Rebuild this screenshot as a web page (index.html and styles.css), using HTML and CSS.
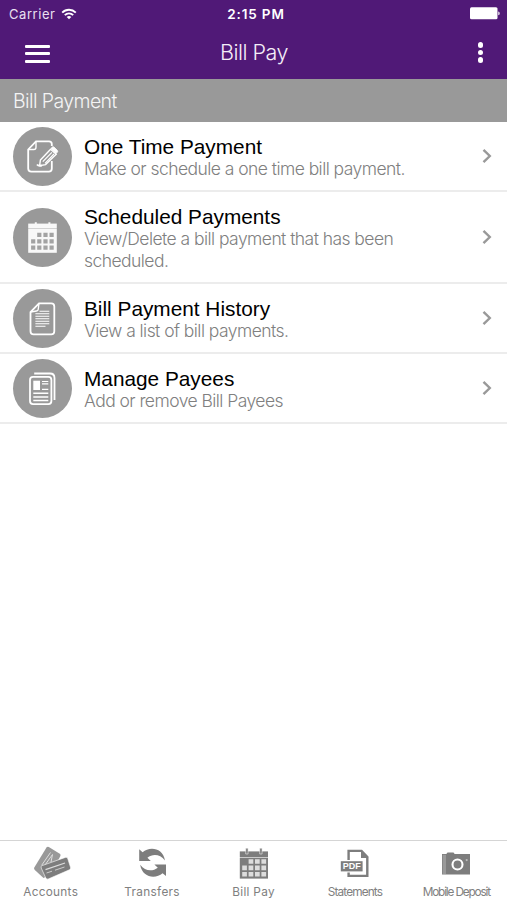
FILE: index.html
```html
<!DOCTYPE html>
<html lang="en">
<head>
    <meta charset="UTF-8">
    <meta name="viewport" content="width=device-width, initial-scale=1.0">
    <title>Bill Pay</title>
    <link rel="stylesheet" href="styles.css">
</head>
<body>
    <div class="status-bar">
        <div class="carrier">
            <span>Carrier</span>
            <svg width="16" height="12" viewBox="0 0 16 12" fill="none" stroke="#fff" stroke-width="1.9">
                <path d="M1.2 4.6C5 .8 11 .8 14.8 4.6M3.8 7.2C6.2 4.8 9.8 4.8 12.2 7.2"/>
                <path d="M5.7 8.9C7 7.7 9 7.7 10.3 8.9L8 11.3Z" fill="#fff" stroke="none"/>
            </svg>
        </div>
        <div class="clock">2:15 PM</div>
        <div class="battery">
            <svg width="30" height="13" viewBox="0 0 30 13" fill="#fff">
                <rect x="0" y="0.3" width="27.5" height="12" rx="1.5"/>
                <path d="M28.3 4.5C30.1 5 30.1 7.8 28.3 8.3Z"/>
            </svg>
        </div>
    </div>

    <div class="nav-bar">
        <div class="menu-button">
            <span></span>
            <span></span>
            <span></span>
        </div>
        <div class="nav-title">Bill Pay</div>
        <div class="more-button">
            <span></span>
            <span></span>
            <span></span>
        </div>
    </div>

    <div class="section-header"><span>Bill Payment</span></div>

    <div class="list">
        <div class="row">
            <div class="row-icon">
                <svg width="59" height="59" viewBox="0 0 59 59" fill="none" stroke="#fff" stroke-width="1.8">
                    <path d="M38.8 19V17Q38.8 14.3 36 14.3H23L15.2 22.5V41.5Q15.2 44.7 18.4 44.7H35.8Q38.8 44.7 38.8 41.5V34"/>
                    <path d="M23 14.5V20.3Q23 22.5 20.8 22.5H15.5" stroke-width="1.4"/>
                    <path d="M27.4 33L37.6 22.2L43.2 27.2L32.6 37.6L26.6 38.6Z" fill="#999" stroke-width="1.4"/>
                    <path d="M38.2 21.2L39.5 20Q40.3 19.6 41 20.2L44.4 23.5Q45 24.4 44.4 25.1L43 26.5Z" fill="#fff" stroke-width="1"/>
                    <path d="M29.8 34.6L38.9 25.3M32 36.3L41 27" stroke-width="1.2"/>
                    <path d="M24 37.4Q25 39 29 38.6" stroke-width="1.9"/>
                </svg>
            </div>
            <div class="row-text">
                <div class="row-title">One Time Payment</div>
                <div class="row-desc">Make or schedule a one time bill payment.</div>
            </div>
            <svg class="chevron" width="10" height="16" viewBox="0 0 10 16"><path d="M1.5 1.8L7.8 8L1.5 14.2"/></svg>
        </div>

        <div class="row">
            <div class="row-icon">
                <svg width="59" height="59" viewBox="0 0 59 59" fill="#f8f8f8">
                    <rect x="15.2" y="15.6" width="28.6" height="4.4"/>
                    <rect x="15.2" y="20.4" width="28.6" height="24.4"/>
                    <path d="M21.8 14.2h2v3h-2zM35.4 14.2h2v3h-2z"/>
                    <g fill="#a3a3a3">
                        <path d="M24.2 24.8h4.2v4.2h-4.2zM30.4 24.8h4.2v4.2h-4.2zM36.5 24.8h4.2v4.2h-4.2z"/>
                        <path d="M18.1 31.2h4.2v4.2h-4.2zM24.2 31.2h4.2v4.2h-4.2zM30.4 31.2h4.2v4.2h-4.2zM36.5 31.2h4.2v4.2h-4.2z"/>
                        <path d="M18.1 37.6h4.2v4.2h-4.2zM24.2 37.6h4.2v4.2h-4.2zM30.4 37.6h4.2v4.2h-4.2zM36.5 37.6h4.2v4.2h-4.2z"/>
                    </g>
                </svg>
            </div>
            <div class="row-text">
                <div class="row-title">Scheduled Payments</div>
                <div class="row-desc">View/Delete a bill payment that has been scheduled.</div>
            </div>
            <svg class="chevron" width="10" height="16" viewBox="0 0 10 16"><path d="M1.5 1.8L7.8 8L1.5 14.2"/></svg>
        </div>

        <div class="row">
            <div class="row-icon">
                <svg width="59" height="59" viewBox="0 0 59 59" fill="none" stroke="#fff" stroke-width="1.8">
                    <path d="M26 14.3H38.2Q41.3 14.3 41.3 17.4V42.2Q41.3 45.3 38.2 45.3H20.6Q17.5 45.3 17.5 42.2V23Z"/>
                    <path d="M26 14.5L25.2 20.3Q25 21.8 23.5 22L17.6 23" stroke-width="1.3"/>
                    <path d="M26.5 22.2H36.3M22.4 24.8H36.3M22.4 27.3H36.3M22.4 29.8H36.3M22.4 32.3H36.3M22.4 34.8H36.3M22.4 37.3H32.5" stroke-width="1.1"/>
                </svg>
            </div>
            <div class="row-text">
                <div class="row-title">Bill Payment History</div>
                <div class="row-desc">View a list of bill payments.</div>
            </div>
            <svg class="chevron" width="10" height="16" viewBox="0 0 10 16"><path d="M1.5 1.8L7.8 8L1.5 14.2"/></svg>
        </div>

        <div class="row">
            <div class="row-icon">
                <svg width="59" height="59" viewBox="0 0 59 59" fill="none" stroke="#fff" stroke-width="1.8">
                    <path d="M21.2 14.5H37Q41.5 14.5 41.5 19V41"/>
                    <rect x="17" y="17.9" width="21.4" height="27.2" rx="3"/>
                    <path d="M20.3 21.7H27V31H20.3Z" fill="#fff" stroke="none"/>
                    <path d="M29 22.5H35.3M29 24.9H35.3M29 30.3H35.3" stroke-width="1.2"/>
                    <path d="M20.3 34.3H35.3M20.3 37.9H35.3M20.3 41.4H35.3" stroke-width="1.5"/>
                </svg>
            </div>
            <div class="row-text">
                <div class="row-title">Manage Payees</div>
                <div class="row-desc">Add or remove Bill Payees</div>
            </div>
            <svg class="chevron" width="10" height="16" viewBox="0 0 10 16"><path d="M1.5 1.8L7.8 8L1.5 14.2"/></svg>
        </div>
    </div>

    <div class="tab-bar">
        <div class="tab">
            <svg width="40" height="36" viewBox="0 0 40 36">
                <path d="M3.3 22.4L15.5 2.6Q16.4 1.3 17.8 2L28.8 8.8Q30 9.8 29.4 11L20 29L12.5 33L3.8 25Q2.6 23.8 3.3 22.4Z" fill="#999"/>
                <path d="M10.5 20.5L19.5 7.5M14 20L21.5 9.5L20 17" fill="none" stroke="#ddd" stroke-width="1"/>
                <path d="M11.2 20.6L34.4 12.4Q36.2 12 36.8 13.8L39.5 22.3Q40 24 38.4 24.8L17.2 34Q15.4 34.6 14.7 32.8L10.2 23Q9.7 21.4 11.2 20.6Z" fill="#7d7d7d" stroke="#fff" stroke-width=".6"/>
                <path d="M14.5 24.6L34 18" stroke="#ddd" stroke-width="1.3"/>
                <path d="M15.5 28L21 26.2M24 25.2L33.5 22" stroke="#ccc" stroke-width="1"/>
            </svg>
            <span class="tab-label">Accounts</span>
        </div>
        <div class="tab">
            <svg width="40" height="36" viewBox="0 0 40 36" fill="#7d7d7d">
                <path id="arrow" d="M7.2 4.3L10.6 7.2C17.5 1.2 31 2.5 33 15.6C28 8.8 20.5 8.8 15.4 12.7L18.8 16H7.2Z"/>
                <use href="#arrow" transform="rotate(180 20.6 17.7)"/>
            </svg>
            <span class="tab-label">Transfers</span>
        </div>
        <div class="tab">
            <svg width="40" height="36" viewBox="0 0 40 36" fill="#7d7d7d">
                <rect x="5.8" y="6.4" width="28.2" height="5.6"/>
                <rect x="5.8" y="12.6" width="28.2" height="21"/>
                <path d="M11.7 3.2h2.4V9h-2.4zM25.7 3.2h2.4V9h-2.4z" stroke="#fff" stroke-width=".5"/>
                <g fill="#ddd">
                    <path d="M14.6 14.2h4.7v4.6h-4.7zM21 14.2h4.7v4.6h-4.7zM27.4 14.2h4.7v4.6h-4.7z"/>
                    <path d="M8.2 20.6h4.7v4.6H8.2zM14.6 20.6h4.7v4.6h-4.7zM21 20.6h4.7v4.6h-4.7zM27.4 20.6h4.7v4.6h-4.7z"/>
                    <path d="M8.2 27h4.7v4.6H8.2zM14.6 27h4.7v4.6h-4.7zM21 27h4.7v4.6h-4.7zM27.4 27h4.7v4.6h-4.7z"/>
                </g>
            </svg>
            <span class="tab-label">Bill Pay</span>
        </div>
        <div class="tab">
            <svg width="40" height="36" viewBox="0 0 40 36">
                <path d="M13.6 15V5.9H26.5L32.3 12V30.9H13.6V27.5" fill="none" stroke="#7d7d7d" stroke-width="2.4"/>
                <path d="M26 5V13H33.4Z" fill="#7d7d7d"/>
                <rect x="5.8" y="16.2" width="21.8" height="10.2" fill="#7d7d7d"/>
                <text class="pdf" x="16.7" y="24.2" text-anchor="middle" textLength="18" lengthAdjust="spacingAndGlyphs">PDF</text>
            </svg>
            <span class="tab-label statements">Statements</span>
        </div>
        <div class="tab">
            <svg width="40" height="36" viewBox="0 0 40 36" fill="#7d7d7d">
                <path d="M10.3 9.1L11.5 7.4H17.5L18.7 9.1H34V29.6H6V9.1Z"/>
                <path d="M6.6 9.8H10V29H6.6Z" fill="#999"/>
                <circle cx="21.5" cy="19.5" r="5" fill="#7d7d7d" stroke="#fff" stroke-width="2.1"/>
                <circle cx="30.7" cy="15.1" r="1.1" fill="#bbb"/>
            </svg>
            <span class="tab-label deposit">Mobile Deposit</span>
        </div>
    </div>
</body>
</html>
```
FILE: styles.css
```css
* {
    box-sizing: border-box;
}
body {
    margin: 0;
    height: 900px;
    overflow: hidden;
    display: flex;
    flex-direction: column;
    background: #fff;
    font-family: Inter, "Liberation Sans", sans-serif;
}
svg {
    display: block;
    flex: none;
}
.status-bar {
    height: 27px;
    padding: 0 7px 0 9px;
    display: grid;
    grid-template-columns: 1fr auto 1fr;
    align-items: center;
    background: #501977;
    color: #fff;
    font-size: 13px;
}
.carrier {
    display: flex;
    align-items: center;
    gap: 6px;
    color: #e9e0f0;
    letter-spacing: 0.55px;
}
.clock {
    padding-left: 3px;
    font-size: 13.5px;
    font-weight: 600;
    letter-spacing: 0.85px;
}
.battery {
    display: flex;
    justify-content: flex-end;
}
.nav-bar {
    height: 52px;
    padding: 0 24px 0 25px;
    display: grid;
    grid-template-columns: 1fr auto 1fr;
    align-items: center;
    background: #501977;
}
.menu-button {
    display: flex;
    flex-direction: column;
    gap: 4.5px;
    padding-top: 1px;
}
.menu-button span {
    width: 25px;
    height: 3px;
    border-radius: 1px;
    background: #fff;
}
.nav-title {
    padding-bottom: 2px;
    color: #f4eef8;
    font-size: 21.5px;
    font-weight: 300;
    letter-spacing: -0.5px;
}
.more-button {
    display: flex;
    flex-direction: column;
    align-items: flex-end;
    gap: 2px;
    padding-bottom: 1px;
}
.more-button span {
    width: 5.5px;
    height: 5.5px;
    border-radius: 50%;
    background: #fff;
}
.section-header {
    height: 43px;
    padding: 1px 0 0 13px;
    display: flex;
    align-items: center;
    background: #999;
    color: #f4f4f4;
    font-size: 19.5px;
    font-weight: 300;
    letter-spacing: -0.6px;
}
.list {
    flex: 1;
}
.row {
    display: flex;
    align-items: center;
    min-height: 70px;
    padding: 1px 15px 0 13px;
    border-bottom: 2px solid #ececec;
}
.row-icon {
    flex: none;
    width: 59px;
    height: 59px;
    border-radius: 50%;
    background: #999;
}
.row-text {
    flex: 1;
    padding: 13px 60px 10px 12px;
}
.row-title {
    color: #000;
    font-family: "Liberation Sans", Arial, sans-serif;
    font-size: 20.8px;
    line-height: 22px;
}
.row-desc {
    color: #808080;
    font-size: 17.5px;
    font-weight: 300;
    line-height: 22px;
    letter-spacing: -0.55px;
}
.chevron {
    margin-bottom: 1px;
}
.chevron path {
    fill: none;
    stroke: #999;
    stroke-width: 2.4;
}
.tab-bar {
    height: 60px;
    display: flex;
    border-top: 1px solid #d5d5d5;
}
.tab {
    flex: 1 1 0;
    min-width: 0;
    padding-top: 4px;
    display: flex;
    flex-direction: column;
    align-items: center;
}
.tab-label {
    margin-top: 4px;
    color: #808080;
    font-size: 11.8px;
    line-height: 15px;
    letter-spacing: 0.3px;
    white-space: nowrap;
}
.statements {
    letter-spacing: -0.85px;
}
.deposit {
    letter-spacing: -1.15px;
}
.pdf {
    fill: #fff;
    font-family: "Liberation Sans", Arial, sans-serif;
    font-size: 8.5px;
    font-weight: bold;
}
```
